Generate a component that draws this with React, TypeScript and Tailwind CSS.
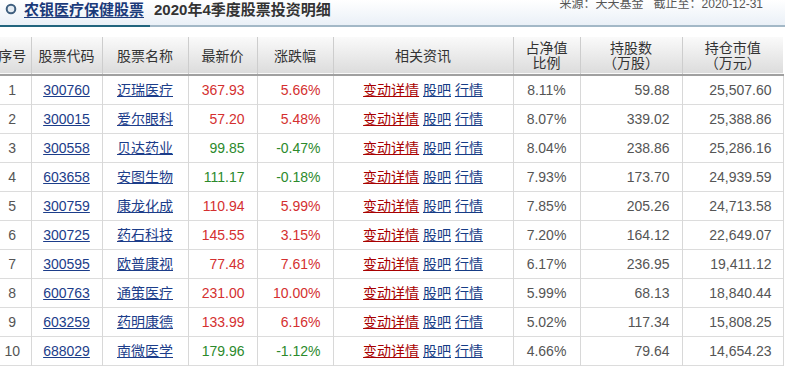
import React from "react";

type Row = [string, string, string, string, string, string, string, string];

const rows: Row[] = [
  ["1", "300760", "迈瑞医疗", "367.93", "5.66%", "8.11%", "59.88", "25,507.60"],
  ["2", "300015", "爱尔眼科", "57.20", "5.48%", "8.07%", "339.02", "25,388.86"],
  ["3", "300558", "贝达药业", "99.85", "-0.47%", "8.04%", "238.86", "25,286.16"],
  ["4", "603658", "安图生物", "111.17", "-0.18%", "7.93%", "173.70", "24,939.59"],
  ["5", "300759", "康龙化成", "110.94", "5.99%", "7.85%", "205.26", "24,713.58"],
  ["6", "300725", "药石科技", "145.55", "3.15%", "7.20%", "164.12", "22,649.07"],
  ["7", "300595", "欧普康视", "77.48", "7.61%", "6.17%", "236.95", "19,411.12"],
  ["8", "600763", "通策医疗", "231.00", "10.00%", "5.99%", "68.13", "18,840.44"],
  ["9", "603259", "药明康德", "133.99", "6.16%", "5.02%", "117.34", "15,808.25"],
  ["10", "688029", "南微医学", "179.96", "-1.12%", "4.66%", "79.64", "14,654.23"],
];

const widths = [37, 71, 86, 69, 76, 180, 67, 102, 101];

const font = { fontFamily: '"Liberation Sans", Arial, "Noto Sans CJK SC", sans-serif' };

export default function App() {
  return (
    <div className="w-[785px] h-[375px] overflow-hidden bg-white text-[#333]" style={font}>
      {/* title bar */}
      <div className="flex items-start h-[25px] bg-gradient-to-b from-white to-[#eaf0f7]">
        <svg width="12" height="12" viewBox="0 0 12 12" className="ml-[5px] mt-[3px] shrink-0">
          <circle cx="6" cy="6" r="4.3" fill="#e4ebf2" stroke="#3f5f7f" strokeWidth="2" />
        </svg>
        <a className="ml-[7px] mt-[2px] text-[15px] leading-[16px] font-bold text-[#1b3a7a] underline underline-offset-2">
          农银医疗保健股票
        </a>
        <span className="ml-[10px] mt-[2px] text-[15px] leading-[16px] font-bold text-[#333]">
          2020年4季度股票投资明细
        </span>
        <span className="ml-auto mr-[22px] -mt-[3px] text-[12px] leading-[14px] text-[#555] whitespace-pre">
          来源：天天基金{"   "}截止至：2020-12-31
        </span>
      </div>
      <div className="flex h-[2px]">
        <div className="w-[150px] bg-[#22657e]" />
        <div className="flex-1 bg-[#a3b8c7]" />
      </div>

      {/* table */}
      <table className="mt-[10px] -ml-[6px] table-fixed border-collapse text-[14px]" style={{ width: 789 }}>
        <colgroup>
          {widths.map((w, i) => (
            <col key={i} style={{ width: w }} />
          ))}
        </colgroup>
        <thead>
          <tr className="h-[38px] bg-gradient-to-b from-[#fafafa] to-[#dcdcdc] border-b-2 border-[#a0a0a0] text-[#333] font-normal">
            {[
              ["序号"],
              ["股票代码"],
              ["股票名称"],
              ["最新价"],
              ["涨跌幅"],
              ["相关资讯"],
              ["占净值", "比例"],
              ["持股数", "（万股）"],
              ["持仓市值", "（万元）"],
            ].map((h, i) => (
              <th
                key={i}
                className={`font-normal text-center p-0 ${i < 8 ? "border-r border-[#cdcdcd]" : ""} ${h.length > 1 ? "leading-[15px]" : "leading-[16px]"}`}
              >
                {h.map((t, j) => (
                  <div key={j}>{t}</div>
                ))}
              </th>
            ))}
          </tr>
        </thead>
        <tbody>
          {rows.map((r) => {
            const neg = r[4].startsWith("-");
            const c = neg ? "text-[#2c8a2c]" : "text-[#d43030]";
            const td = "p-0 h-[29px] border-r border-[#d8d8d8] leading-[16px]";
            return (
              <tr key={r[0]} className="border-b border-[#dcdcdc]">
                <td className={`${td} text-center text-[#555]`}>{r[0]}</td>
                <td className={`${td} text-center`}>
                  <a className="text-[#1c3d8a] underline">{r[1]}</a>
                </td>
                <td className={`${td} text-center`}>
                  <a className="text-[#1c3d8a] underline">{r[2]}</a>
                </td>
                <td className={`${td} text-right pr-[12px] ${c}`}>{r[3]}</td>
                <td className={`${td} text-right pr-[12px] ${c}`}>{r[4]}</td>
                <td className={`${td} text-center`}>
                  <a className="text-[#a80000] underline">变动详情</a>{" "}
                  <a className="text-[#163c86] underline">股吧</a>{" "}
                  <a className="text-[#163c86] underline">行情</a>
                </td>
                <td className={`${td} text-center text-[#555]`}>{r[5]}</td>
                <td className={`${td} text-right pr-[12px] text-[#555]`}>{r[6]}</td>
                <td className="p-0 h-[29px] text-right pr-[11px] text-[#555] leading-[16px] border-r border-[#d8d8d8]">{r[7]}</td>
              </tr>
            );
          })}
        </tbody>
      </table>
    </div>
  );
}
